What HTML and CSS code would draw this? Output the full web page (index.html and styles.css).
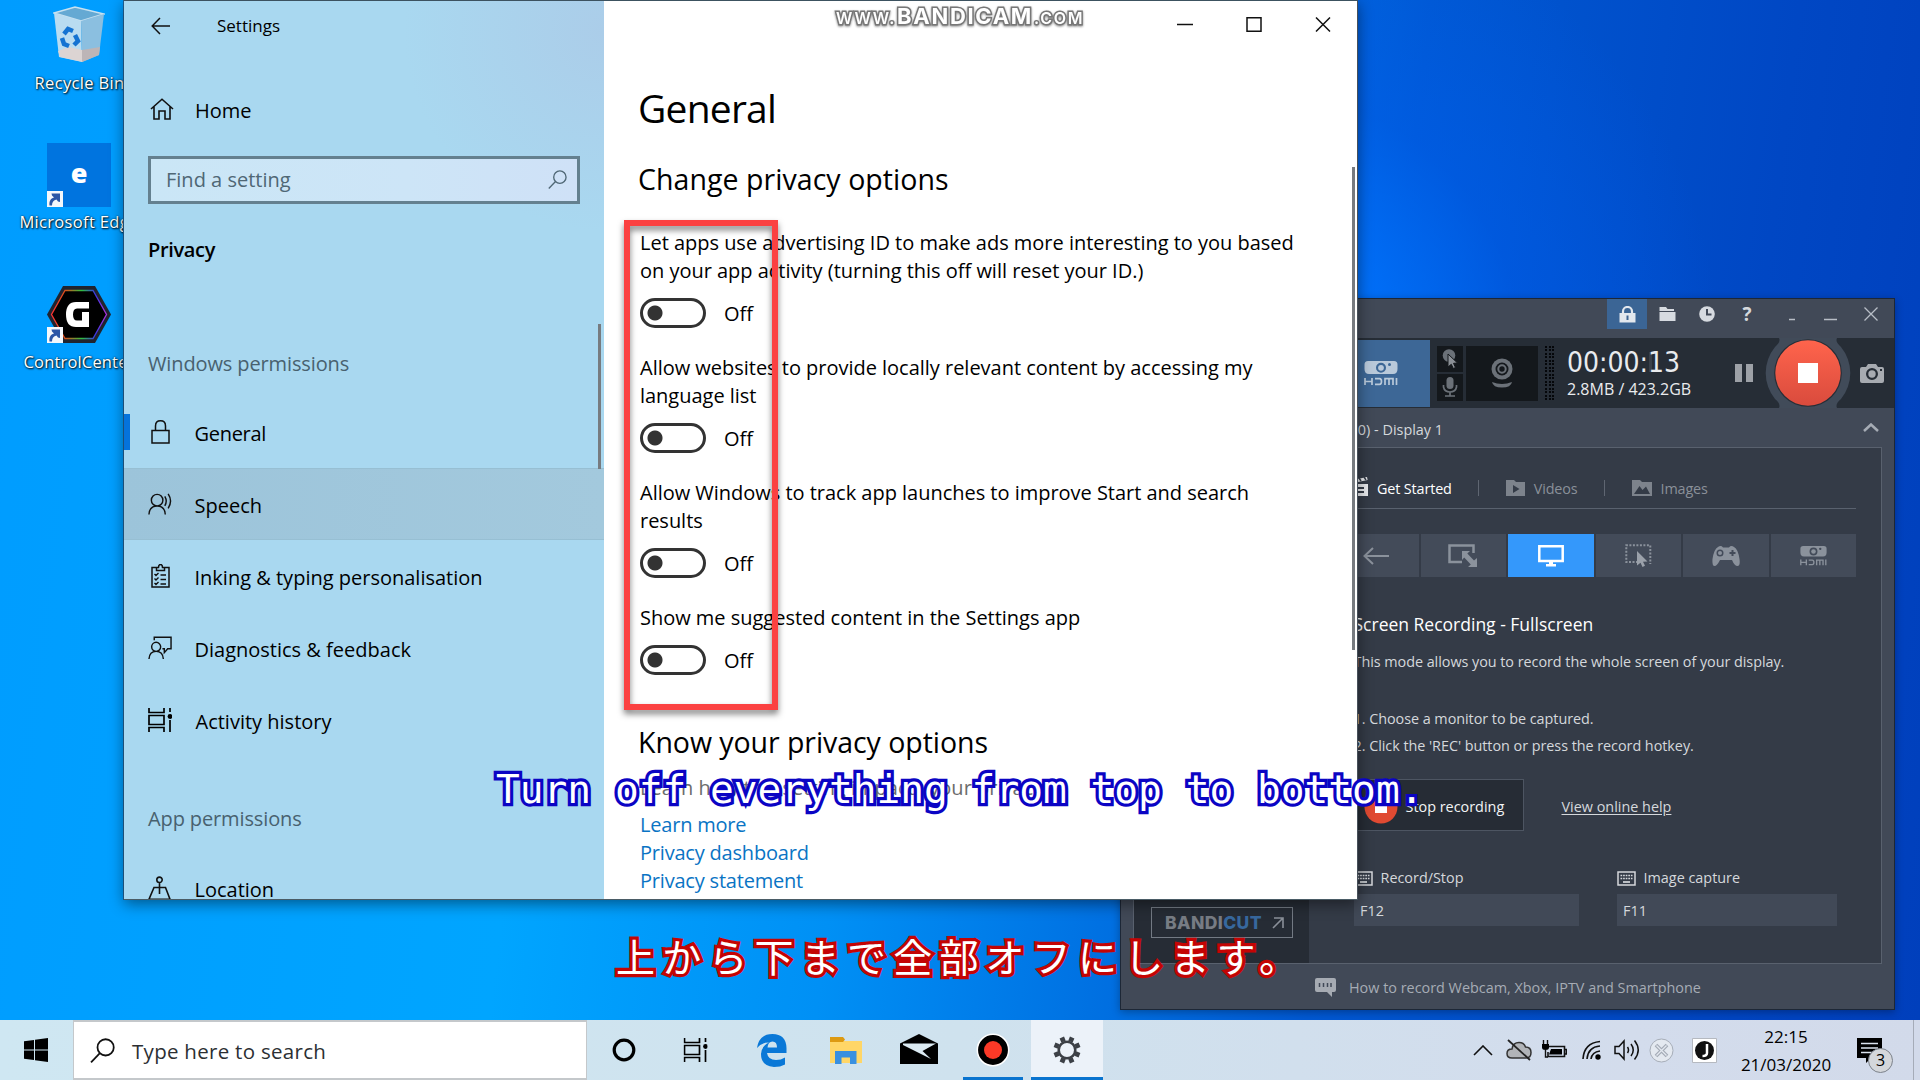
FILE: index.html
```html
<!DOCTYPE html>
<html lang="en">
<head>
<meta charset="utf-8">
<title>Settings - Privacy</title>
<link rel="stylesheet" href="styles.css">
</head>
<body>
<svg class="defs" aria-hidden="true">
  <defs>
    <symbol id="shortcut" viewBox="0 0 16 16"><rect width="16" height="16" fill="#f4f7fb"/><path d="M2.5 14.5C2 10 3.600 7.500 7 6.500L5 4.500 4.500 2.500h8.500v8.500l-2-.5-1.500-2C6.500 9.500 5 11 5 14.500z" fill="#2c56a6"/></symbol>
    <symbol id="lens" viewBox="0 0 24 24"><circle cx="15" cy="9" r="7.800" fill="none" stroke="currentColor" stroke-width="1.700"/><path d="M9.500 14.500 1 23.300" fill="none" stroke="currentColor" stroke-width="1.700"/></symbol>
    <symbol id="timeline" viewBox="0 0 24 24"><path d="M1 0v4.500h15V0M1 24v-4.500h15V24M1 7.500h15v9H1zM22 0v4M22 12v12" fill="none" stroke="currentColor" stroke-width="1.700"/><circle cx="22" cy="8.500" r="2.400" fill="currentColor"/></symbol>
    <symbol id="hdmi" viewBox="0 0 34 25"><path fill="currentColor" fill-rule="evenodd" d="M4 0h26q3.500 0 3.500 3.500V8Q33.500 13 29 13H5Q.5 13 .5 8V3.500Q.5 0 4 0zM17 1.800a5 5 0 1 0 0 10 5 5 0 0 0 0-10zm8.500.2a1.500 1.500 0 1 0 0 3 1.500 1.500 0 0 0 0-3z"/><circle cx="17" cy="6.800" r="2.900" fill="currentColor"/><path d="M1 17v7M8 17v7M1 20.500h7M11 17.700h4.500q2 0 2 2.800t-2 2.800H11M21 24v-6.300h8V24M25 18v6M32.500 17v7" fill="none" stroke="currentColor" stroke-width="1.700"/></symbol>
    <symbol id="keyboard" viewBox="0 0 19 15"><path d="M1 1h17v13H1z" fill="none" stroke="currentColor" stroke-width="1.500"/><path d="M3.500 4.500h12M3.500 7.500h12" stroke="currentColor" stroke-width="1.700" stroke-dasharray="1.700 .9"/><path d="M6 11h7" stroke="currentColor" stroke-width="1.700"/></symbol>
  </defs>
</svg>

<main class="desktop">
  <section class="shortcuts">
    <figure class="shortcut recycle">
      <svg width="52" height="58" viewBox="0 0 52 58"><path d="M1 7 22 1l29 7-23 7z" fill="#65a9d3" stroke="#c7e1f0" stroke-width="1.500"/><path d="M1 7l27 8 1 41L6 51z" fill="#b9dcf1"/><path d="M51 8l-23 7 1 41 17-7z" fill="#8bbfe0"/><path d="M5 45l11-4 13 3 1 12-23-5z" fill="#dcd4d3"/><path d="M29 44l18-3-1 8-17 7z" fill="#bdb5b7"/><g fill="none" stroke="#1473d2" stroke-width="4.500"><path d="m11 28 4-5 5 2"/><path d="m22 29 3 6-4 4"/><path d="m16 40-5-2-2-6"/></g></svg>
      <figcaption>Recycle Bin</figcaption>
    </figure>
    <figure class="shortcut edge">
      <div class="edge-tile"><span>e</span><svg class="arrow" width="16" height="16"><use href="#shortcut"/></svg></div>
      <figcaption>Microsoft Edge</figcaption>
    </figure>
    <figure class="shortcut control">
      <div class="hexagon">
        <svg width="64" height="57" viewBox="0 0 64 57"><defs><linearGradient id="rgb"><stop offset="0" stop-color="#f33"/><stop offset=".25" stop-color="#d8501c"/><stop offset=".55" stop-color="#2fbf40"/><stop offset=".8" stop-color="#3a35e8"/><stop offset="1" stop-color="#b133dd"/></linearGradient></defs><path d="M16 0h32l16 28.500L48 57H16L0 28.500z" fill="#20242f"/><path d="M18 4.500h28l13.500 24L46 52.500H18L4.500 28.500z" fill="#000" stroke="url(#rgb)" stroke-width="1.300"/><path d="M42 16v6.500H30q-4 0-4 6t4 6h5V26h7v15H29q-10 0-10-12.500T29 16z" fill="#fff"/></svg>
        <svg class="arrow" width="16" height="16"><use href="#shortcut"/></svg>
      </div>
      <figcaption>ControlCenter</figcaption>
    </figure>
  </section>

  <section class="recorder">
    <header class="rec-title">
      <span class="tool lock"><svg width="17" height="17" viewBox="0 0 17 17"><path d="M4 8V5.500a4.500 4.500 0 0 1 9 0V8" fill="none" stroke="#e3e8ee" stroke-width="2.200"/><path d="M.5 7h16v9.500H.5z" fill="#e3e8ee"/><path d="M7.500 9.500h2V14h-2z" fill="#3d6592"/></svg></span>
      <span class="tool"><svg width="17" height="14" viewBox="0 0 17 14"><path d="M.5 0h6.500l1.500 2H15v2H.5zM.5 5h16v9H.5z" fill="#d6dae0"/></svg></span>
      <span class="tool"><svg width="16" height="16" viewBox="0 0 16 16"><circle cx="8" cy="8" r="7.800" fill="#d6dae0"/><path d="M8 3v5.500h4.500" fill="none" stroke="#414957" stroke-width="2"/></svg></span>
      <span class="tool help">?</span>
      <span class="tool gap"><svg width="6" height="14"><path d="M0 12.500h6" stroke="#b8bec7" stroke-width="1.500"/></svg></span>
      <span class="tool narrow"><svg width="13" height="14"><path d="M0 12.500h13" stroke="#b8bec7" stroke-width="1.500"/></svg></span>
      <span class="tool last"><svg width="14" height="14"><path d="m.5.500 13 13m0-13-13 13" stroke="#b8bec7" stroke-width="1.300"/></svg></span>
    </header>
    <div class="rec-strip">
      <div class="device"><svg width="34" height="25"><use href="#hdmi"/></svg></div>
      <div class="toggles">
        <span><svg width="16" height="20" viewBox="0 0 16 20"><circle cx="7" cy="6.500" r="6.300" fill="#6b7178"/><path d="m6 5 9.500 9-4 .3 2 4.200-2.200 1-2-4.200L6 18z" fill="#8b9096" stroke="#14181c"/></svg></span>
        <span><svg width="16" height="20" viewBox="0 0 16 20"><rect x="4.500" y="0" width="7" height="12" rx="3.500" fill="#6b7178"/><path d="M1.500 8v2q1 5 6.500 5t6.500-5V8M8 15v4M3 19h10" fill="none" stroke="#6b7178" stroke-width="1.700"/></svg></span>
      </div>
      <div class="webcam"><svg width="22" height="30" viewBox="0 0 22 30"><circle cx="11" cy="11" r="10.500" fill="#6b7178"/><circle cx="11" cy="11" r="6.500" fill="#14181c"/><circle cx="11" cy="11" r="3.700" fill="none" stroke="#6b7178" stroke-width="2"/><path d="M1 24q10 4 20 0-1 5.500-10 5.500T1 24z" fill="#6b7178"/></svg></div>
      <div class="meter"></div>
      <div class="clock"><span class="digits">00:00:<i>1</i>3</span><span class="size">2.8MB / 423.2GB</span></div>
      <svg class="pause" width="18" height="18"><path d="M0 0h7v18H0zM11 0h7v18h-7z" fill="#9da1a7"/></svg>
      <svg class="rec-button" width="92" height="70" viewBox="0 0 92 70"><defs><linearGradient id="red" x2="0" y2="1"><stop stop-color="#ff644c"/><stop offset="1" stop-color="#d94b3d"/></linearGradient></defs><path d="M17 0h58q-2 4 4 9a41 41 0 0 1 0 52q-6 5-4 9H17q2-4-4-9a41 41 0 0 1 0-52q6-5 4-9z" fill="#414b59"/><circle cx="46" cy="35" r="33.800" fill="#262d36"/><circle cx="46" cy="35" r="32.700" fill="url(#red)"/><path d="M36 25h20v20H36z" fill="#fff"/></svg>
      <svg class="camera" width="24" height="19" viewBox="0 0 24 19"><path fill-rule="evenodd" fill="#a7abb1" d="M2 3h4l2-3h8l2 3h4q2 0 2 2v12q0 2-2 2H2q-2 0-2-2V5q0-2 2-2zm10 1a6 6 0 1 0 0 12 6 6 0 0 0 0-12zm8 1v2h2V5z"/><circle cx="12" cy="10" r="3.700" fill="#a7abb1"/></svg>
    </div>
    <div class="rec-source"><span>(1920x1080) - Display 1</span><svg width="16" height="9"><path d="m1 8 7-6.500L15 8" fill="none" stroke="#a6acb5" stroke-width="2.500"/></svg></div>
    <div class="rec-panel">
      <aside class="rec-side"><a class="bandicut"><b>BANDI<em>CUT</em></b><svg width="12" height="12"><path d="M2 1h9v10M11 1 1 11" fill="none" stroke="#8a9099" stroke-width="1.600"/></svg></a></aside>
      <div class="rec-main">
        <nav class="tabs">
          <span class="tab active"><svg width="18" height="19" viewBox="0 0 18 19"><path fill="#e8eaed" fill-rule="evenodd" d="M0 3.500 17 0l.6 3L.6 6.500zM0 7h18v12H0zm5 3v2h9v-2zm0 4v2h9v-2z"/><path d="m4 2 2 3m3-4 2 3m3-4 2 3" stroke="#343b47" stroke-width="1.500"/></svg>Get Started</span>
          <span class="bar"></span>
          <span class="tab videos"><svg width="19" height="16" viewBox="0 0 19 16"><path d="M0 0h8l2 2h9v14H0z" fill="#7d838c"/><path d="m7 5 6.500 4L7 13z" fill="#343b47"/></svg>Videos</span>
          <span class="bar"></span>
          <span class="tab images"><svg width="20" height="16" viewBox="0 0 20 16"><path d="M0 0h8l2 2h10v14H0z" fill="#7d838c"/><path d="M2 14 7.500 6l3 4L14 6.500l4 7.500z" fill="#343b47"/></svg>Images</span>
        </nav>
        <div class="modes">
          <span><svg width="26" height="18" viewBox="0 0 26 18"><path d="M26 9H2m8-8L1.500 9l8.500 8" fill="none" stroke="#8b929c" stroke-width="2"/></svg></span>
          <span><svg width="30" height="23" viewBox="0 0 30 23"><path d="M14 18H1.500V1.500h24V9" fill="none" stroke="#8b929c" stroke-width="2.500"/><path d="M14 7h8l-2.700 2.500 6.700 7L29 14v9h-9l2.800-2.600-6.600-7L14 16z" fill="#8b929c"/></svg></span>
          <span class="on"><svg width="26" height="22" viewBox="0 0 26 22"><path d="M1.300 1.300h23.400V16H1.300z" fill="none" stroke="#fff" stroke-width="2.500"/><path d="M11 16h4v3h3v2.500H8V19h3z" fill="#fff"/></svg></span>
          <span><svg width="27" height="23" viewBox="0 0 27 23"><path d="M13 18H1.300V1.300h24V20" fill="none" stroke="#8b929c" stroke-width="2" stroke-dasharray="2 1.500"/><path d="m12 7 10.500 10.500-4.500.3 2 4-2.500 1.200-2-4.300L12 21.500z" fill="#9ba1aa"/></svg></span>
          <span><svg width="28" height="20" viewBox="0 0 28 20"><path fill="#8b929c" fill-rule="evenodd" d="M6 1q3-2 5 .5h6Q19-1 22 1q4 2 5.500 12 1 7-2 7T20 14H8q-3 6-5.500 6t-2-7Q2 3 6 1zm2 2.500a3.500 3.500 0 1 0 0 7 3.500 3.500 0 0 0 0-7zM19.500 4v2h-2v2h2v2h2V8h2V6h-2V4z"/><circle cx="8" cy="7" r="2" fill="#8b929c"/></svg></span>
          <span class="dim"><svg width="27" height="20" viewBox="0 0 34 25"><use href="#hdmi"/></svg></span>
        </div>
        <div class="mode-info">
          <h3>Screen Recording - Fullscreen</h3>
          <p>This mode allows you to record the whole screen of your display.</p>
          <ol><li>Choose a monitor to be captured.</li><li>Click the 'REC' button or press the record hotkey.</li></ol>
          <div class="actions">
            <span class="stop"><svg width="34" height="34" viewBox="0 0 34 34"><circle cx="17" cy="17" r="16.500" fill="#e04a32"/><path d="M11 11h12v12H11z" fill="#fff"/></svg>Stop recording</span>
            <a>View online help</a>
          </div>
          <div class="hotkeys">
            <div><label><svg width="19" height="15"><use href="#keyboard"/></svg>Record/Stop</label><span class="key">F12</span></div>
            <div><label><svg width="19" height="15"><use href="#keyboard"/></svg>Image capture</label><span class="key">F11</span></div>
          </div>
        </div>
      </div>
    </div>
    <footer class="rec-foot"><svg width="21" height="19" viewBox="0 0 21 19"><path fill="#a6abb3" d="M2 0h17q2 0 2 2v10q0 2-2 2h-2v5l-5-5H2q-2 0-2-2V2q0-2 2-2z"/><path d="M4.500 5v4M8.500 5v4M12.500 5v4M16 5v4" stroke="#414957" stroke-width="1.500"/></svg>How to record Webcam, Xbox, IPTV and Smartphone</footer>
  </section>

  <section class="settings">
    <aside class="side">
      <div class="side-title"><svg width="19" height="18"><path d="M19 9H1.500M9 1 1.200 9 9 17" fill="none" stroke="#111" stroke-width="1.500"/></svg>Settings</div>
      <div class="home"><svg width="24" height="22" viewBox="0 0 24 22"><path d="M1 11 12 1.200 23 11M4 8.500V21h5v-8h6v8h5V8.500" fill="none" stroke="#111" stroke-width="1.600"/></svg>Home</div>
      <div class="find"><span>Find a setting</span><svg width="19" height="19"><use href="#lens"/></svg></div>
      <h4>Privacy</h4>
      <h5>Windows permissions</h5>
      <ul class="nav">
        <li class="current"><svg width="24" height="24" viewBox="0 0 24 24"><path d="M4 10.500h17V23H4zM7.500 10.500V6q0-5.200 5-5.200t5 5.200v4.500" fill="none" stroke="#111" stroke-width="1.500"/></svg>General</li>
        <li class="hover"><svg width="25" height="24" viewBox="0 0 25 24"><path d="M1 23q.5-9 8.500-9 8 0 8.500 9M9.500 14a6 6 0 1 0 0-12 6 6 0 0 0 0 12M17.500 4q3 5 0 10M21 1.500q5 7.500 0 15" fill="none" stroke="#111" stroke-width="1.500"/></svg>Speech</li>
        <li><svg width="24" height="24" viewBox="0 0 24 24"><path d="M9 3.500H4V23h17V3.500h-5M8.500 6.500V3.500h2q0-3 2-3t2 3h2v3z" fill="none" stroke="#111" stroke-width="1.500"/><path d="m6.500 10 1.500 1.500L10.500 9M6.500 14.500 8 16l2.500-2.500M6.500 19 8 20.500l2.500-2.500M12.500 11H18M12.500 15.500H18M12.500 20H18" fill="none" stroke="#111" stroke-width="1.400"/></svg>Inking &amp; typing personalisation</li>
        <li><svg width="25" height="24" viewBox="0 0 25 24"><path d="M1 23.500q.5-8 7.500-8t7.500 8M8.500 15.500a4.700 4.700 0 1 0 0-9.400 4.700 4.700 0 0 0 0 9.400M6.500 4V.8H24v12h-3.500l-3.500 4v-4h-2" fill="none" stroke="#111" stroke-width="1.500"/></svg>Diagnostics &amp; feedback</li>
        <li><svg width="24" height="24"><use href="#timeline"/></svg><span class="nudge">Activity history</span></li>
      </ul>
      <h5 class="apps">App permissions</h5>
      <ul class="nav location"><li><svg width="24" height="24" viewBox="0 0 24 24"><path d="M6 11.500h11.500L22 23.200H1zM11.500 18V6.500M11.500 6.500a2.700 2.700 0 1 0 0-5.400 2.700 2.700 0 0 0 0 5.400" fill="none" stroke="#111" stroke-width="1.600"/></svg>Location</li></ul>
      <span class="scroll side-scroll"></span>
    </aside>
    <div class="content">
      <div class="window-buttons">
        <svg width="16" height="15"><path d="M0 7.500h16" stroke="#111" stroke-width="1.500"/></svg>
        <svg width="16" height="15"><path d="M1 .8h14v13.500H1z" fill="none" stroke="#111" stroke-width="1.500"/></svg>
        <svg width="16" height="15"><path d="m1 .5 14 14m0-14-14 14" stroke="#111" stroke-width="1.500"/></svg>
      </div>
      <h1>General</h1>
      <h2>Change privacy options</h2>
      <div class="option"><p>Let apps use advertising ID to make ads more interesting to you based<br>on your app activity (turning this off will reset your ID.)</p><div class="switch"><i></i>Off</div></div>
      <div class="option"><p>Allow websites to provide locally relevant content by accessing my<br>language list</p><div class="switch"><i></i>Off</div></div>
      <div class="option"><p>Allow Windows to track app launches to improve Start and search<br>results</p><div class="switch"><i></i>Off</div></div>
      <div class="option"><p>Show me suggested content in the Settings app</p><div class="switch"><i></i>Off</div></div>
      <h2 class="know">Know your privacy options</h2>
      <p class="learn">Learn how this setting impacts your privacy.</p>
      <div class="links"><a>Learn more</a><a>Privacy dashboard</a><a>Privacy statement</a></div>
      <span class="scroll main-scroll"></span>
    </div>
  </section>

  <div class="highlight"></div>
  <div class="watermark"><span>WWW.</span><b>BANDICAM</b><span>.COM</span></div>
  <div class="caption english">Turn off everything from top to bottom.</div>
  <div class="caption japanese" lang="ja">上から下まで全部オフにします。</div>
</main>

<footer class="taskbar">
  <div class="start"><svg width="24" height="24" viewBox="0 0 24 24"><path d="M0 3.300 10 2v9.500H0zM11 1.800 24 0v11.500H11zM0 12.500h10V22L0 20.700zM11 12.500h13V24l-13-1.800z"/></svg></div>
  <div class="search"><svg width="25" height="25"><use href="#lens"/></svg>Type here to search</div>
  <div class="apps-row">
    <span class="app"><svg width="24" height="24"><circle cx="12" cy="12" r="9.800" fill="none" stroke="#000" stroke-width="3.200"/></svg></span>
    <span class="app view"><svg width="25" height="24" viewBox="0 0 24 24"><use href="#timeline"/></svg></span>
    <span class="app offset"><svg width="30" height="33" viewBox="0 0 30 33"><path fill="#0a78d7" d="M0 14Q2 0 15.500 0 29 0 29.500 14v5H10q1 7 9 7 5 0 9-2.500v7Q23.500 33 17 33 4 32 4 20 4.500 12 12 8.500 4.500 8.500 0 14zm10.500-.5H20Q20 7.500 15.500 7.500T10.500 13.500z"/></svg></span>
    <span class="app offset"><svg width="32" height="27" viewBox="0 0 32 27"><path d="M0 4h32v22H0z" fill="#ffd667"/><path d="M0 0h13l2 2.500-2 2.500H0z" fill="#dd9a12"/><path d="M5 27V14h21.500v13H20v-6.500h-8.500V27z" fill="#3990e0"/></svg></span>
    <span class="app offset"><svg class="mail" width="38" height="30" viewBox="0 0 38 30"><path d="M0 9.500 19 0l19 9.500V30H0z"/><path d="M3 9.500h33L22.500 17 31 25 3 11z" fill="#dcebf3"/></svg></span>
    <span class="app running"><svg width="34" height="34"><circle cx="17" cy="17" r="15.700" fill="#000" stroke="#fff" stroke-width="1.500"/><circle cx="17" cy="17" r="9" fill="#fb3927"/></svg></span>
    <span class="app running open"><svg width="28" height="28" viewBox="-14 -14 28 28"><circle r="8.300" fill="none" stroke="#3c4046" stroke-width="2.600"/><path d="M0-9v-4.500M0 9v4.500M9 0h4.500M-9 0h-4.500M6.400-6.400l3.200-3.200M6.400 6.400l3.200 3.200M-6.400 6.400l-3.200 3.200M-6.400-6.400l-3.200-3.200" transform="rotate(22.500)" stroke="#3c4046" stroke-width="4.800"/></svg></span>
  </div>
  <div class="tray">
    <svg width="20" height="11"><path d="m1 10 9-9 9 9" fill="none" stroke="#111" stroke-width="1.600"/></svg>
    <svg class="cloud" width="26" height="22" viewBox="0 0 26 22"><path d="M6 19q-5 0-5-4.500T6 10q1-6.500 7-6.500 5 0 6.500 4.500 5.500 0 5.500 5.500T20 19z" fill="#b1b4b8" stroke="#333" stroke-width="1.500"/><path d="M2 1 24 21" stroke="#222" stroke-width="1.800"/></svg>
    <svg class="battery" width="26" height="20" viewBox="0 0 26 20"><path d="M8 6.500h15.500v10H7V12M24 9.500h1.500V14H24" fill="none" stroke="#111" stroke-width="1.600"/><path d="M10 9h11v5.500H8zM1 4h7v3.500Q8 10 4.500 10T1 7.500z"/><path d="M2.500 0v4M6.500 0v4M4.500 10v7H7" fill="none" stroke="#111" stroke-width="1.400"/></svg>
    <svg class="wifi" width="19" height="20" viewBox="0 0 19 20"><path d="M1 19Q2 3 18 1.500M5 19Q6 7 18 6M9 19q1-7 9-8" fill="none" stroke="#111" stroke-width="1.600"/><circle cx="16" cy="17" r="2.700"/></svg>
    <svg class="volume" width="26" height="22" viewBox="0 0 26 22"><path d="M1 7.500h4L10 2v18l-5-5.500H1zM13.500 8q2 3 0 6M17 5q4.500 6 0 12M20.500 1.500q7.500 9.500 0 19" fill="none" stroke="#111" stroke-width="1.500"/></svg>
    <svg class="cross" width="25" height="25"><circle cx="12.500" cy="12.500" r="11.500" fill="#e4e9f0" stroke="#a6adb8"/><path d="m7 7 11 11m0-11L7 18" stroke="#a4abb6" stroke-width="3.800"/><path d="m7.500 7.500 10 10m0-10-10 10" stroke="#e4e9f0" stroke-width="1.300"/></svg>
    <svg class="ime" width="25" height="25"><path d="M.5.500h24v24H.5z" fill="#fff" stroke="#b5b9c0"/><circle cx="12.500" cy="12.500" r="9.500" fill="#111"/><path d="M15 6v9q0 3-4.500 3" fill="none" stroke="#fff" stroke-width="2.500"/></svg>
    <div class="time"><span>22:15</span><span>21/03/2020</span></div>
    <div class="notes"><svg width="25" height="25" viewBox="0 0 25 25"><path d="M0 0h25v20H14l-5 5v-5H0z"/><path d="M4 5.500h17M4 10h17M4 14.500h12" stroke="#dbe3ee" stroke-width="1.700"/></svg><b>3</b></div>
  </div>
</footer>
</body>
</html>
```
FILE: styles.css
```css
* { box-sizing: border-box; margin: 0; padding: 0; }
body { width: 1920px; height: 1080px; overflow: hidden; font-family: "Open Sans", "Noto Sans", sans-serif; font-size: 20px; color: #000; }
svg { display: block; flex: none; }
ul, ol { list-style: none; }
i, em { font-style: normal; }
.defs { position: absolute; width: 0; height: 0; }

.desktop {
  position: relative; width: 1920px; height: 1020px; overflow: hidden;
  background:
    radial-gradient(circle at 1260px 350px, rgba(0,125,255,.95) 0, rgba(0,115,255,.85) 110px, rgba(0,95,240,.45) 260px, rgba(0,90,235,0) 460px),
    linear-gradient(97deg, #009cff 0, #00a5ff 30%, #0090f5 46%, #0074e4 58%, #0058d2 70%, #0047c4 88%, #003fbc 100%);
}

/* desktop shortcuts */
.shortcuts { display: flex; flex-direction: column; width: 158px; }
.shortcut { display: flex; flex-direction: column; align-items: center; height: 140px; color: #fff; font-size: 16.5px; line-height: 24px; white-space: nowrap; text-shadow: 1px 1px 2px #000, 0 0 2px rgba(0,0,0,.7); }
.recycle { padding-top: 6px; height: 143px; }
.recycle figcaption { margin-top: 7px; letter-spacing: .02em; padding-left: 1px; }
.edge { height: 143px; }
.edge figcaption { margin-top: 3px; letter-spacing: .02em; }
.control figcaption { margin-top: 7px; letter-spacing: .01em; }
.edge-tile { position: relative; display: flex; align-items: center; justify-content: center; width: 64px; height: 64px; background: #0074df; text-shadow: none; font-weight: 800; font-size: 27px; padding-bottom: 4px; }
.hexagon { position: relative; height: 57px; }
.arrow { position: absolute; left: 0; bottom: 0; }

/* settings window */
.settings { position: absolute; left: 124px; top: 0; width: 1234px; height: 900px; display: flex; overflow: hidden; border-top: 1px solid #3c5260; border-right: 1px solid #47505a; border-bottom: 1px solid #4a5c66; box-shadow: 0 4px 14px rgba(0,0,0,.45), -1px 0 0 #24659a; background: #fff; }
.side { position: relative; width: 480px; background: radial-gradient(circle at 480px 30px, #abcde9 0, rgba(171,208,234,0) 200px), #a9d8f0; }
.side-title { display: flex; align-items: center; height: 49px; padding-left: 27px; gap: 47px; font-size: 17px; }
.home { display: flex; align-items: center; height: 48px; margin-top: 36px; padding-left: 26px; gap: 21px; }
.home svg { margin-top: -3px; }
.find { display: flex; align-items: center; justify-content: space-between; width: 432px; height: 48px; margin: 22px 0 0 24px; padding: 0 10px 2px 15px; border: 3px solid #64808f; background: linear-gradient(90deg, #cae6f6, #cde5f7 60%, #cfe1f7); color: #4f6775; }
.side h4, .side h5 { padding-left: 24px; line-height: 30px; }
.side h4 { margin-top: 31px; font-size: 20px; font-weight: 600; letter-spacing: -.017em; }
.side h5 { margin-top: 84px; font-size: 20px; font-weight: 400; color: #48616f; letter-spacing: -.006em; }
.nav { margin-top: 17px; }
.nav li { display: flex; align-items: center; gap: 22.500px; height: 72px; padding: 3px 0 0 24px; }
.nav li svg { margin-top: -4px; width: 24px; }
.nav .current { background: linear-gradient(#0573dc, #0573dc) 0 18px / 6px 36px no-repeat; letter-spacing: -.015em; }
.nav .hover { background: linear-gradient(90deg, #9cc4da, #a3c9dd); border-top: 1px solid #97bfd3; border-bottom: 1px solid #97bfd3; }
.nudge { margin-left: 1px; }
.side h5.apps { margin-top: 48px; }
.nav.location { margin-top: 18px; }
.scroll { position: absolute; width: 3px; background: #777b80; }
.side-scroll { right: 3px; top: 323px; height: 145px; }
.content { position: relative; flex: 1; padding-left: 35px; background: #fff; }
.window-buttons { display: flex; justify-content: flex-end; gap: 53px; padding: 16px 26px 0 0; height: 81px; }
h1 { height: 51px; margin-left: -1px; line-height: 51px; font-size: 39px; font-weight: 400; letter-spacing: -.02em; }
h2 { height: 38px; line-height: 38px; margin: 27px 0 31px -1px; font-size: 28.5px; font-weight: 400; letter-spacing: .002em; }
.option { padding-left: 1px; margin-bottom: 26px; line-height: 27.500px; letter-spacing: -.001em; }
.switch { display: flex; align-items: center; gap: 18px; height: 31px; margin-top: 13px; line-height: 31px; padding-top: 1px; }
.switch i { width: 66px; height: 30px; margin-top: -1px; border: 3px solid #333; border-radius: 15px; background: radial-gradient(circle at 12px 12px, #333 7px, transparent 8px); }
h2.know { margin: 47px 0 13px -1px; letter-spacing: -.002em; }
.learn, .links { padding-left: 1px; line-height: 28px; }
.learn { color: #6c6c6c; }
.links { display: flex; flex-direction: column; align-items: flex-start; margin-top: 9px; color: #0a74c4; letter-spacing: -.01em; }
.main-scroll { right: 2px; top: 166px; height: 483px; }

/* overlays */
.highlight { position: absolute; left: 624px; top: 220px; width: 154px; height: 490px; border: 6px solid #fb4141; filter: drop-shadow(0 4px 3px rgba(0,0,0,.5)); }
.watermark { position: absolute; left: 836px; top: 3px; display: flex; align-items: baseline; font: 600 16px/26px Inter, sans-serif; color: #fff; letter-spacing: 1.700px; -webkit-text-stroke: 3px #777; paint-order: stroke fill; filter: drop-shadow(0 1px 1px #888); white-space: nowrap; }
.watermark b { font-weight: 700; font-size: 22px; letter-spacing: 1.700px; margin: 0 1px; }
.caption { position: absolute; white-space: nowrap; color: #fff; paint-order: stroke fill; }
.english { left: 496px; top: 761px; font: 39.500px/56px "DejaVu Sans Mono", monospace; -webkit-text-stroke: 6.500px #0b04c4; }
.japanese { left: 616px; top: 926px; font: 400 39px/58px "Noto Sans CJK JP", sans-serif; letter-spacing: 7.200px; -webkit-text-stroke: 6.500px #c40404; }

/* recorder window */
.recorder { position: absolute; left: 1120px; top: 298px; width: 775px; height: 712px; border: 1px solid #1d2736; background: #414957; color: #d5d8dc; font-size: 14.400px; box-shadow: 0 2px 8px rgba(0,0,0,.3); }
.rec-title { display: flex; justify-content: flex-end; height: 39px; padding-right: 1px; }
.tool { display: flex; align-items: center; justify-content: center; width: 40px; height: 30px; }
.lock { background: #3b6595; }
.help { font-size: 19px; font-weight: 700; }
.gap { margin-left: 5px; }
.narrow { width: 37px; }
.last { width: 44px; }
.rec-strip { display: flex; align-items: center; height: 70px; padding-left: 211px; background: #262d36; }
.device { display: flex; align-items: center; justify-content: center; width: 98px; height: 67px; background: #3d6796; color: #b9c9da; }
.toggles { display: flex; flex-direction: column; gap: 2px; margin-left: 7px; }
.toggles span, .webcam { display: flex; align-items: center; justify-content: center; background: #14181c; }
.toggles span { width: 26px; height: 26.500px; }
.webcam { width: 72px; height: 55px; margin-left: 3px; }
.meter { width: 10px; height: 55px; margin-left: 7px; background: repeating-linear-gradient(90deg, transparent 0 2px, #262d36 2px 3.500px), repeating-linear-gradient(#05070a 0 2px, #262d36 2px 3.500px); }
.clock { display: flex; flex-direction: column; width: 167px; margin-left: 12px; padding-top: 2px; white-space: nowrap; color: #e9ebee; }
.digits { font: 28px/30px "DejaVu Sans Condensed", "DejaVu Sans", sans-serif; font-stretch: condensed; }
.digits i { background: linear-gradient(#39404a, #39404a) 1px 6px / 3px 20px no-repeat; }
.size { font-size: 16px; line-height: 22px; }
.pause { margin-left: 1px; }
.rec-button { margin-left: 9px; }
.camera { margin-left: 6px; }
.rec-source { display: flex; align-items: center; justify-content: space-between; height: 39px; padding: 4px 15px 0 160px; white-space: nowrap; }
.rec-source span { width: 162px; text-align: right; }
.rec-source svg { margin-top: -4px; }
.rec-panel { display: flex; height: 517px; margin: 0 12px 0 12px; border: 1px solid #59616e; background: #343b47; }
.rec-side { display: flex; flex-direction: column; justify-content: flex-end; width: 175px; padding: 0 16px 25px 17px; background: #262c35; }
.bandicut { display: flex; align-items: center; justify-content: space-between; height: 31px; padding: 0 8px 0 13px; border: 1px solid #737a84; color: #777c84; }
.bandicut b { font: 800 17.500px/28px Inter, sans-serif; letter-spacing: .4px; }
.bandicut em { color: #37689e; }
.rec-main { flex: 1; padding: 20px 25px 0 24px; }
.tabs { display: flex; align-items: center; height: 41px; border-bottom: 1px solid #59616e; color: #8a9099; white-space: nowrap; }
.tab { display: flex; align-items: center; gap: 9px; letter-spacing: -.01em; }
.active { padding-left: 17px; color: #fff; }
.tab.active svg { margin-top: -4px; }
.videos { margin-left: 27px; }
.images { margin-left: 27px; gap: 9px; }
.bar { width: 1px; height: 16px; margin-left: 26px; background: #5f6672; }
.modes { display: grid; grid-template-columns: repeat(6, 1fr); gap: 2px; height: 43px; margin-top: 25px; }
.modes span { display: flex; align-items: center; justify-content: center; background: #434b59; }
.modes span.on { background: #3498fb; }
.dim { color: #8b929c; }
.mode-info { padding-left: 20.500px; line-height: 26px; white-space: nowrap; }
.mode-info h3 { margin-top: 34px; font-size: 17.500px; font-weight: 400; color: #fff; }
.mode-info p { margin-top: 12px; letter-spacing: -.003em; }
.mode-info ol { margin-top: 31px; line-height: 26.500px; counter-reset: n; letter-spacing: -.003em; }
.mode-info li::before { counter-increment: n; content: counter(n) ". "; }
.actions { display: flex; align-items: center; gap: 38px; height: 52px; margin-top: 20px; }
.stop { display: flex; align-items: center; gap: 8px; width: 170px; height: 52px; padding: 3px 0 0 9px; border: 1px solid #4d5562; background: #262c35; color: #f3f4f6; }
.actions a { padding-top: 3px; text-decoration: underline; text-underline-offset: 2px; }
.hotkeys { display: flex; gap: 38px; margin-top: 34px; }
.hotkeys > div { width: 225px; }
.hotkeys > div + div { width: 220px; }
.hotkeys label { display: flex; align-items: center; gap: 8px; height: 26px; }
.key { display: block; height: 32px; margin-top: 3px; padding-left: 6.500px; line-height: 33px; background: #414957; }
.rec-foot { display: flex; align-items: center; gap: 13px; height: 46px; padding-left: 194px; color: #a6acb5; }

/* taskbar */
.taskbar { display: flex; height: 60px; background: linear-gradient(90deg, #cfe7f2, #cfe2ee 50%, #d3dcec 85%, #d2daea); }
.start { display: flex; align-items: center; width: 73px; padding-left: 24px; }
.search { display: flex; align-items: center; gap: 17px; width: 514px; padding: 2px 0 0 16px; border: 1px solid #c4c8cb; border-width: 2px 1px; background: #fff; font-size: 20.500px; letter-spacing: .014em; color: #2c2f33; }
.search svg { margin-top: -2px; color: #111; }
.apps-row { display: flex; flex: none; width: 516px; }
.app { display: flex; flex: none; align-items: center; justify-content: center; width: 73.700px; height: 60px; }
.app:first-child { width: 73px; }
.app.view { padding-right: 2px; }
.app.offset { padding-left: 3px; }
.mail { margin-top: -3px; }
.running { width: 60px; margin: 0 8px; border-bottom: 3px solid #0a74cf; padding-top: 3px; }
.running.open { width: 72px; margin: 0; background: #ecf2f9; }
.tray { display: flex; flex: 1; align-items: center; padding-left: 370px; }
.cloud { margin-left: 13px; }
.battery { margin-left: 9px; }
.wifi { margin-left: 15px; }
.volume { margin-left: 13px; }
.cross { margin-left: 9px; }
.ime { margin-left: 18px; }
.time { display: flex; flex-direction: column; align-items: center; width: 92px; margin-left: 23px; padding-top: 2px; font-size: 17px; line-height: 28px; }
.notes { position: relative; display: flex; align-items: center; width: 57px; height: 60px; margin-left: 25px; border-right: 1px solid #a5acb8; }
.notes b { position: absolute; left: 11px; top: 28px; width: 25px; height: 25px; border: 1px solid #7c828b; border-radius: 50%; background: #d4d7db; font-size: 16px; line-height: 23px; font-weight: 400; text-align: center; }
```
